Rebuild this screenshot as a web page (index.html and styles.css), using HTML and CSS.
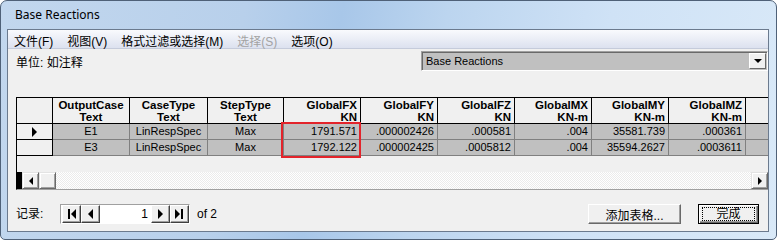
FILE: index.html
```html
<!DOCTYPE html>
<html lang="zh-CN">
<head>
    <meta charset="UTF-8">
    <title>Base Reactions</title>
    <link rel="stylesheet" href="styles.css">
</head>
<body>
    <div class="window">
        <div class="titlebar">Base Reactions</div>
        <div class="client">
            <!-- メニュー -->
            <div class="menubar">
                <span>文件(F)</span>
                <span>视图(V)</span>
                <span>格式过滤或选择(M)</span>
                <span class="disabled">选择(S)</span>
                <span>选项(O)</span>
            </div>

            <div class="unitrow">
                <span>单位: 如注释</span>
                <div class="combo">
                    <span>Base Reactions</span>
                    <span class="combo-btn"><span class="tri-down"></span></span>
                </div>
            </div>

            <!-- 表 -->
            <div class="grid">
                <div class="hrow">
                    <div class="cell sel"></div>
                    <div class="cell c"><span>OutputCase</span><span>Text</span></div>
                    <div class="cell c w78"><span>CaseType</span><span>Text</span></div>
                    <div class="cell c w76"><span>StepType</span><span>Text</span></div>
                    <div class="cell r"><span>GlobalFX</span><span>KN</span></div>
                    <div class="cell r"><span>GlobalFY</span><span>KN</span></div>
                    <div class="cell r"><span>GlobalFZ</span><span>KN</span></div>
                    <div class="cell r"><span>GlobalMX</span><span>KN-m</span></div>
                    <div class="cell r"><span>GlobalMY</span><span>KN-m</span></div>
                    <div class="cell r"><span>GlobalMZ</span><span>KN-m</span></div>
                    <div class="cell last"></div>
                </div>
                <div class="row">
                    <div class="cell sel"><span class="tri-right"></span></div>
                    <div class="cell c">E1</div>
                    <div class="cell c w78">LinRespSpec</div>
                    <div class="cell c w76">Max</div>
                    <div class="cell r">1791.571</div>
                    <div class="cell r">.000002426</div>
                    <div class="cell r">.000581</div>
                    <div class="cell r">.004</div>
                    <div class="cell r">35581.739</div>
                    <div class="cell r">.000361</div>
                    <div class="cell last"></div>
                </div>
                <div class="row">
                    <div class="cell sel"></div>
                    <div class="cell c">E3</div>
                    <div class="cell c w78">LinRespSpec</div>
                    <div class="cell c w76">Max</div>
                    <div class="cell r">1792.122</div>
                    <div class="cell r">.000002425</div>
                    <div class="cell r">.0005812</div>
                    <div class="cell r">.004</div>
                    <div class="cell r">35594.2627</div>
                    <div class="cell r">.0003611</div>
                    <div class="cell last"></div>
                </div>
                <div class="filler"></div>
                <div class="hscroll">
                    <div class="sb-black"></div>
                    <div class="sb-btn"><span class="tri-left small"></span></div>
                    <div class="sb-btn"></div>
                    <div class="sb-track"></div>
                    <div class="sb-btn"><span class="tri-right small"></span></div>
                </div>
                <div class="mark"></div>
            </div>

            <div class="footer">
                <span class="rec-label">记录:</span>
                <div class="nav">
                    <div class="nav-btn"><span class="bar"></span><span class="tri-left"></span></div>
                    <div class="nav-btn"><span class="tri-left"></span></div>
                    <div class="nav-field">1</div>
                    <div class="nav-btn"><span class="tri-right"></span></div>
                    <div class="nav-btn"><span class="tri-right"></span><span class="bar"></span></div>
                </div>
                <span class="of">of 2</span>
                <button class="btn add">添加表格...</button>
                <button class="btn default"><span class="focus">完成</span></button>
            </div>
        </div>
    </div>
</body>
</html>
```

FILE: styles.css
```css
* {
    box-sizing: border-box;
}
body {
    margin: 0;
    font-family: "Liberation Sans", "Noto Sans CJK SC", sans-serif;
    font-size: 12px;
    color: #000;
    background: #fff;
}
.window {
    width: 777px;
    height: 240px;
    border: 1px solid #4f6178;
    border-radius: 7px 7px 5px 5px;
    background: linear-gradient(100deg, #c2d7ee 0%, #b8d0eb 30%, #a8c7e9 42%, #bcd5ef 55%, #cfe2f6 75%, #d9e9f8 100%);
    padding: 0 7px 7px 6px;
    display: flex;
    flex-direction: column;
    overflow: hidden;
}
.titlebar {
    height: 28px;
    line-height: 28px;
    padding-left: 8px;
    font-family: "Noto Sans", sans-serif;
    font-size: 12px;
}
.client {
    flex: 1;
    border: 1px solid #6b7a8e;
    background: #f0f0f0;
    display: flex;
    flex-direction: column;
}

/* メニュー */
.menubar {
    height: 19px;
    flex: none;
    display: flex;
    align-items: center;
    gap: 14px;
    padding: 2px 0 0 6px;
    background: linear-gradient(#f9fafd, #dce1ef);
    border-bottom: 1px solid #c5cbdb;
}
.menubar .disabled {
    color: #a3a3a3;
}

.unitrow {
    height: 20px;
    flex: none;
    margin-top: 2px;
    padding-left: 8px;
    display: flex;
    align-items: center;
    justify-content: space-between;
}
.combo {
    width: 347px;
    height: 20px;
    border: 1px solid;
    border-color: #a0a0a0 #ffffff #ffffff #a0a0a0;
    box-shadow: inset 1px 1px 0 #696969;
    background: #c0c0c0;
    display: flex;
    align-items: center;
    padding-left: 4px;
    font-size: 11px;
}
.combo-btn {
    margin-left: auto;
    margin-right: 1px;
    width: 17px;
    height: 16px;
    background: #f0f0f0;
    border: 1px solid;
    border-color: #ffffff #696969 #696969 #ffffff;
    display: flex;
    align-items: center;
    justify-content: center;
}
.tri-down {
    width: 0;
    height: 0;
    border-top: 4px solid #000;
    border-left: 4px solid transparent;
    border-right: 4px solid transparent;
}

/* 表 */
.grid {
    margin: 26px 0 0 8px;
    height: 93px;
    flex: none;
    border-left: 1px solid #000;
    border-top: 1px solid #000;
    border-bottom: 1px solid #a0a0a0;
    position: relative;
    display: flex;
    flex-direction: column;
    overflow: hidden;
    font-size: 11px;
}
.hrow,
.row {
    display: flex;
    flex: none;
}
.hrow {
    height: 26px;
}
.row {
    height: 16px;
}
.cell {
    flex: none;
    width: 77px;
    border-right: 1px solid #000;
    border-bottom: 1px solid #000;
    padding: 0 3px;
    overflow: hidden;
    white-space: nowrap;
}
.cell.sel {
    width: 36px;
}
.cell.w78 {
    width: 78px;
}
.cell.w76 {
    width: 76px;
}
.cell.last {
    width: 40px;
}
.cell.c {
    text-align: center;
}
.cell.r {
    text-align: right;
}
.hrow .cell {
    display: flex;
    flex-direction: column;
    justify-content: center;
    line-height: 12px;
    font-size: 11.5px;
    font-weight: bold;
}
.hrow .cell.last {
    border-right: none;
}
.row .cell {
    line-height: 15px;
    background: #c0c0c0;
    border-color: #808080;
}
.row .cell.sel {
    background: #f0f0f0;
    border-color: #000;
    display: flex;
    align-items: center;
    justify-content: center;
}
.tri-right {
    width: 0;
    height: 0;
    border-left: 5px solid #000;
    border-top: 5px solid transparent;
    border-bottom: 5px solid transparent;
}
.tri-left {
    width: 0;
    height: 0;
    border-right: 5px solid #000;
    border-top: 5px solid transparent;
    border-bottom: 5px solid transparent;
}
.tri-right.small {
    border-left-width: 4px;
    border-top-width: 4px;
    border-bottom-width: 4px;
}
.tri-left.small {
    border-right-width: 4px;
    border-top-width: 4px;
    border-bottom-width: 4px;
}
.filler {
    flex: 1;
}
.hscroll {
    height: 17px;
    flex: none;
    display: flex;
}
.sb-black {
    width: 5px;
    background: #000;
}
.sb-btn {
    width: 17px;
    background: #f0f0f0;
    border: 1px solid;
    border-color: #e3e3e3 #696969 #696969 #e3e3e3;
    box-shadow: inset 1px 1px 0 #fff, inset -1px -1px 0 #a0a0a0;
    display: flex;
    align-items: center;
    justify-content: center;
}
.sb-track {
    flex: 1;
    background-color: #f4f4f4;
    background-image: conic-gradient(#ffffff 25%, #ebebeb 0 50%, #ffffff 0 75%, #ebebeb 0);
    background-size: 2px 2px;
}
.mark {
    position: absolute;
    left: 264px;
    top: 24px;
    width: 80px;
    height: 36px;
    border: 2px solid #e3242b;
}

/* 下部 */
.footer {
    flex: 1;
    display: flex;
    align-items: flex-start;
    padding: 14px 9px 0 8px;
}
.rec-label {
    width: 44px;
    line-height: 20px;
}
.nav {
    display: flex;
    width: 130px;
    height: 20px;
    border: 1px solid;
    border-color: #a0a0a0 #ffffff #ffffff #a0a0a0;
    padding-left: 1px;
    background: #fff;
}
.nav-btn {
    width: 19px;
    height: 18px;
    background: #f0f0f0;
    border: 1px solid;
    border-color: #ffffff #404040 #404040 #ffffff;
    box-shadow: inset -1px -1px 0 #a0a0a0;
    display: flex;
    align-items: center;
    justify-content: center;
}
.nav-btn .bar {
    width: 2px;
    height: 10px;
    background: #000;
    margin: 0 1px;
}
.nav-field {
    width: 51px;
    height: 18px;
    line-height: 18px;
    text-align: right;
    padding-right: 3px;
    background: #fff;
}
.of {
    margin-left: 7px;
    line-height: 20px;
}
.btn {
    height: 20px;
    padding: 0;
    font-family: "Liberation Sans", "Noto Sans CJK SC", sans-serif;
    font-size: 12px;
    color: #000;
    background: #f0f0f0;
    border: 1px solid;
    border-color: #ffffff #696969 #696969 #ffffff;
    box-shadow: inset -1px -1px 0 #a0a0a0;
}
.btn.add {
    width: 93px;
    margin-left: auto;
}
.btn.default {
    width: 61px;
    margin-left: 17px;
    border: 1px solid #000;
    box-shadow: inset 1px 1px 0 #fff, inset -1px -1px 0 #696969, inset -2px -2px 0 #a0a0a0;
    display: flex;
    align-items: center;
    justify-content: center;
}
.btn .focus {
    display: block;
    width: 53px;
    height: 14px;
    line-height: 13px;
    border: 1px dotted #000;
}
```
